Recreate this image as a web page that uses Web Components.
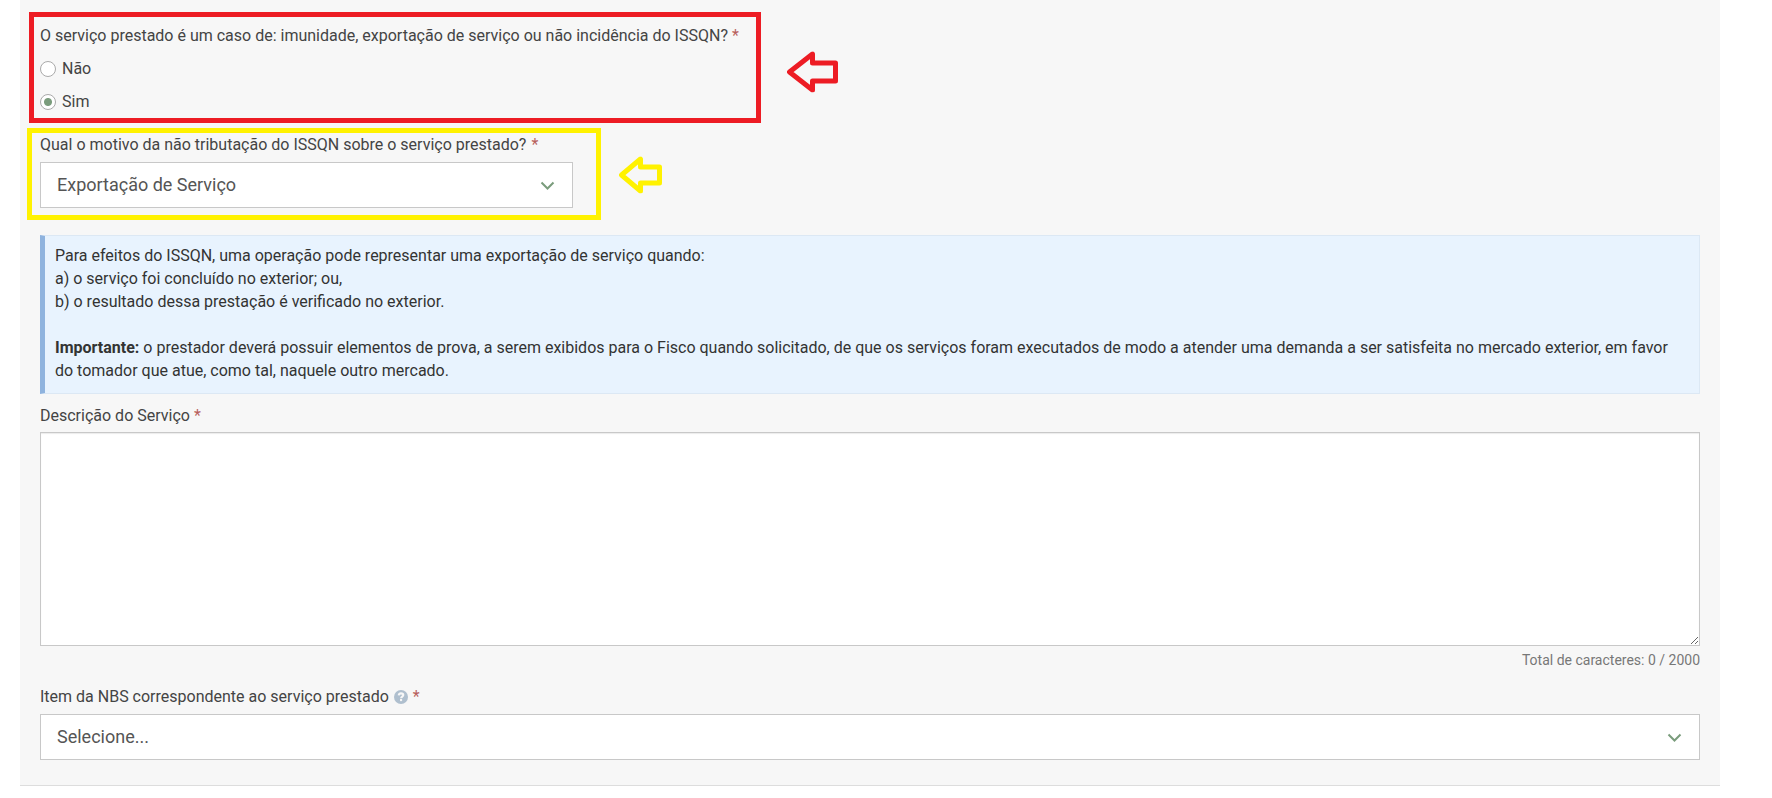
<!DOCTYPE html>
<html lang="pt-BR">
<head>
<meta charset="utf-8">
<meta name="viewport" content="width=device-width, initial-scale=1">
<title>Serviço prestado</title>
<style>
  body {
    margin: 0;
    background: #fff;
    color: #444;
    font: 16px/23px Roboto, "Liberation Sans", sans-serif;
    --line: #c8c8c8;
    --green: #7a9c7c;
    --required: #b8605c;
  }
</style>
</head>
<body>
<form-panel>
  <callout-frame tone="red">
    <radio-group label="O serviço prestado é um caso de: imunidade, exportação de serviço ou não incidência do ISSQN?" name="caso" options="Não|Sim" value="Sim"></radio-group>
  </callout-frame>
  <callout-frame tone="yellow">
    <select-field label="Qual o motivo da não tributação do ISSQN sobre o serviço prestado?" options="Exportação de Serviço|Imunidade|Não Incidência"></select-field>
  </callout-frame>
  <info-note>
    Para efeitos do ISSQN, uma operação pode representar uma exportação de serviço quando:<br>
    a) o serviço foi concluído no exterior; ou,<br>
    b) o resultado dessa prestação é verificado no exterior.<br><br>
    <b>Importante:</b> o prestador deverá possuir elementos de prova, a serem exibidos para o Fisco quando solicitado, de que os serviços foram executados de modo a atender uma demanda a ser satisfeita no mercado exterior, em favor do tomador que atue, como tal, naquele outro mercado.
  </info-note>
  <text-area-field label="Descrição do Serviço" max="2000"></text-area-field>
  <select-field label="Item da NBS correspondente ao serviço prestado" help options="Selecione..."></select-field>
</form-panel>

<script>
const define = (name, render, setup) =>
  customElements.define(name, class extends HTMLElement {
    constructor() { super(); this.attachShadow({ mode: 'open' }); }
    connectedCallback() {
      this.shadowRoot.innerHTML = render(this);
      if (setup) setup(this.shadowRoot, this);
    }
  });

const base = `
  * { box-sizing: border-box; }
  :host { display: block; }
  .req { color: var(--required); }
`;

define('help-icon', () => `
  <style>
    :host { display: inline-flex; }
    button { display: flex; width: 14px; height: 14px; padding: 0; border: 0; background: none; cursor: help; }
  </style>
  <button type="button" aria-label="Ajuda">
    <svg width="14" height="14" viewBox="0 0 14 14" aria-hidden="true">
      <circle cx="7" cy="7" r="7" fill="#afbfce"/>
      <path d="M4.700 5.400C4.900 4 5.800 3.400 7 3.400c1.400 0 2.300.7 2.300 1.700 0 1.500-2.200 1.500-2.200 3.100" fill="none" stroke="#f7f7f7" stroke-width="2.100"/>
      <rect x="6" y="9" width="2.100" height="2.100" fill="#f7f7f7"/>
    </svg>
  </button>`);

define('form-panel', () => `
  <style>${base}
    :host { margin: 0 52px 0 20px; }
    section { display: flex; flex-direction: column; padding: 24px 20px 25px; background: #f7f7f7; border-bottom: 1px solid #ddd; }
    ::slotted(callout-frame) { margin-bottom: 20px; }
    ::slotted(info-note) { margin: 7px 0 10px; }
    ::slotted(text-area-field) { margin-bottom: 15px; }
  </style>
  <section><slot></slot></section>`);

/* Frame drawn over a question, with an arrow beside it pointing at it. */
define('callout-frame', () => `
  <style>${base}
    :host { position: relative; align-self: flex-start; }
    :host([tone="red"]) { --tone: #ed1c24; --inset: -12px -22px -10px -11px; --reach: 48px; --w: 51px; --h: 41px; --mid: calc(50% + 3px); }
    :host([tone="yellow"]) { width: calc((100% + 30px) / 3 - 30px); --tone: #fff200; --inset: -5px -28px -12px -13px; --reach: 46px; --w: 43px; --h: 37px; --mid: calc(50% + 4px); }
    .frame { position: absolute; inset: var(--inset); border: 5px solid var(--tone); pointer-events: none; }
    svg { position: absolute; left: calc(100% + var(--reach)); top: var(--mid); transform: translateY(-50%); width: var(--w); height: var(--h); fill: none; stroke: var(--tone); stroke-width: 5; stroke-linejoin: round; }
    :host([tone="red"]) .small, :host([tone="yellow"]) .large { display: none; }
  </style>
  <slot></slot>
  <div class="frame"></div>
  <svg class="large" viewBox="0 0 51 41" aria-hidden="true"><path d="M2.500 20.500 25.500 2.500V11.500H48.500V29.500H25.500V38.500Z"/></svg>
  <svg class="small" viewBox="0 0 43 37" aria-hidden="true"><path d="M2.500 18.500 21.500 2.500V10.500H40.500V26.500H21.500V34.500Z"/></svg>`);

define('radio-group', el => `
  <style>${base}
    fieldset { display: flex; flex-direction: column; gap: 10px; margin: 0; padding: 0; border: 0; min-width: 0; }
    legend { padding: 0; margin-bottom: 10px; }
    label { display: flex; align-items: center; gap: 6px; }
    input { appearance: none; width: 16px; height: 16px; margin: 0; border: 1px solid #aaa; border-radius: 50%; background: #fff; }
    input:checked { background: radial-gradient(circle, var(--green) 3.5px, #fff 4.5px); }
  </style>
  <fieldset>
    <legend>${el.getAttribute('label')} <span class="req">*</span></legend>
    ${el.getAttribute('options').split('|').map(o => `
      <label><input type="radio" name="${el.getAttribute('name')}" value="${o}"${o === el.getAttribute('value') ? ' checked' : ''}>${o}</label>`).join('')}
  </fieldset>`);

define('select-field', el => `
  <style>${base}
    .head { display: flex; align-items: center; gap: 5px; margin-bottom: 6px; white-space: nowrap; }
    .control { display: grid; align-items: center; }
    .control > * { grid-area: 1 / 1; }
    select { appearance: none; width: 100%; height: 46px; margin: 0; padding: 0 48px 0 16px; border: 1px solid var(--line); border-radius: 0; background: #fff; color: #555; font: 18px/26px Roboto, "Liberation Sans", sans-serif; }
    svg { justify-self: end; margin: 2px 18px 0 0; pointer-events: none; fill: none; stroke: var(--green); stroke-width: 2; }
  </style>
  <div class="head">
    <label for="s">${el.getAttribute('label')}</label>
    ${el.hasAttribute('help') ? '<help-icon></help-icon>' : ''}
    <span class="req">*</span>
  </div>
  <div class="control">
    <select id="s">${el.getAttribute('options').split('|').map(o => `<option>${o}</option>`).join('')}</select>
    <svg width="15" height="10" viewBox="0 0 15 10" aria-hidden="true"><path d="M1.500 1.500 7.500 7.500 13.500 1.500"/></svg>
  </div>`);

define('info-note', () => `
  <style>${base}
    :host { padding: 8px 10px 11px; border: 1px solid #dce8f4; border-left: 5px solid #8fb3de; background: #e8f3fe; color: #333; }
  </style>
  <slot></slot>`);

define('text-area-field', el => `
  <style>${base}
    label { display: block; margin-bottom: 5px; }
    textarea { display: block; width: 100%; height: 214px; margin: 0; padding: 10px 16px; border: 1px solid var(--line); border-radius: 0; background: #fff; box-shadow: inset 0 1px 1px rgba(0,0,0,.08); color: #555; font: 18px/26px Roboto, "Liberation Sans", sans-serif; resize: vertical; }
    output { display: block; margin-top: 4px; text-align: right; color: #777; font-size: 14px; line-height: 20px; }
  </style>
  <label for="t">${el.getAttribute('label')} <span class="req">*</span></label>
  <textarea id="t" maxlength="${el.getAttribute('max')}"></textarea>
  <output for="t">Total de caracteres: 0 / ${el.getAttribute('max')}</output>`,
  (root, el) => {
    const area = root.querySelector('textarea');
    area.addEventListener('input', () => {
      root.querySelector('output').textContent = `Total de caracteres: ${area.value.length} / ${el.getAttribute('max')}`;
    });
  });
</script>
</body>
</html>
